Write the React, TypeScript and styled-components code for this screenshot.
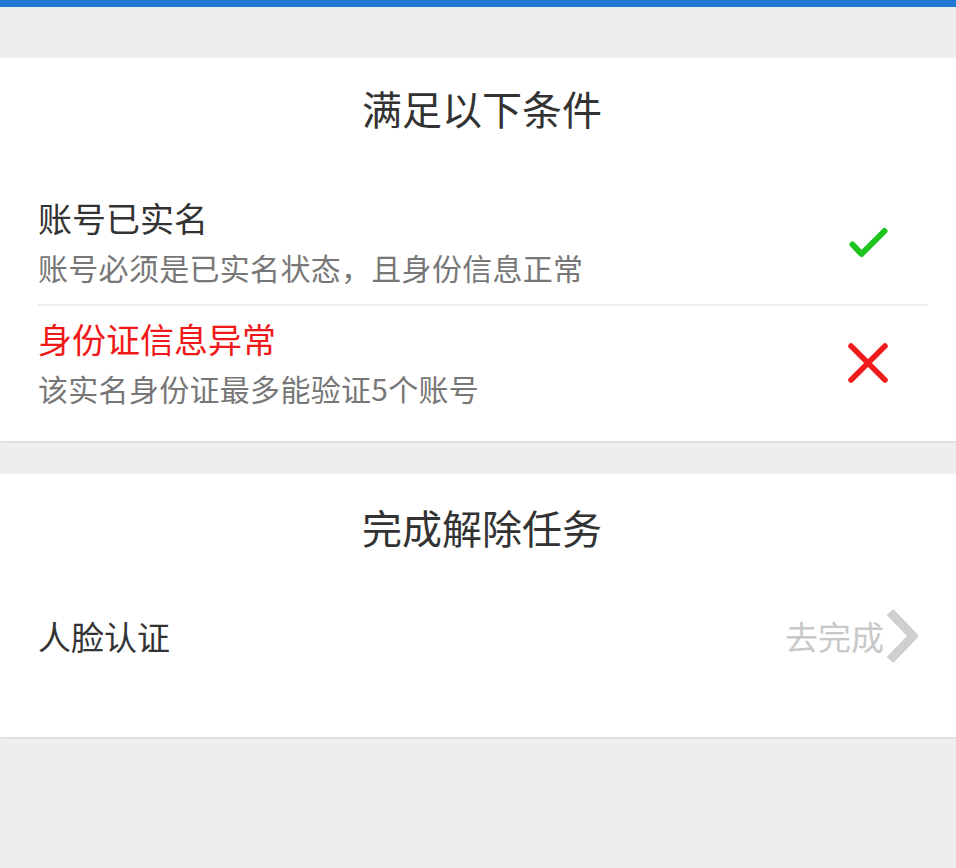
import React from "react";
import styled, { createGlobalStyle } from "styled-components";

const GlobalStyle = createGlobalStyle`
  html, body {
    margin: 0;
    padding: 0;
    background: #eeeeee;
  }
  body {
    font-family: "Noto Sans CJK SC", "Noto Sans", sans-serif;
    -webkit-font-smoothing: antialiased;
  }
`;

const Page = styled.div`
  min-height: 868px;
  background: #eeeeee;
  display: flex;
  flex-direction: column;
`;

const TopBar = styled.div`
  height: 7px;
  background: #2079d4;
`;

const Card = styled.section<{ $mt: number; $pb: number }>`
  margin-top: ${(p) => p.$mt}px;
  background: #ffffff;
  box-shadow: 0 1px 2px rgba(0, 0, 0, 0.12);
  padding-bottom: ${(p) => p.$pb}px;
  display: flex;
  flex-direction: column;
`;

const CardTitle = styled.h2<{ $pt: number; $mb: number }>`
  margin: 0;
  padding-top: ${(p) => p.$pt}px;
  padding-left: 8px;
  margin-bottom: ${(p) => p.$mb}px;
  text-align: center;
  font-size: 40px;
  line-height: 44px;
  font-weight: 400;
  color: #333333;
`;

const ConditionRow = styled.div<{ $divider?: boolean }>`
  margin-left: 38px;
  margin-right: 28px;
  padding: 11px 40px 17px 0;
  display: flex;
  align-items: center;
  border-bottom: ${(p) => (p.$divider ? "2px solid #ececec" : "none")};
`;

const RowText = styled.div`
  flex: 1;
  display: flex;
  flex-direction: column;
  gap: 7px;
`;

const RowTitle = styled.div<{ $error?: boolean }>`
  font-size: 34px;
  line-height: 44px;
  color: ${(p) => (p.$error ? "#f01818" : "#333333")};
`;

const RowDesc = styled.div`
  font-size: 30px;
  line-height: 40px;
  letter-spacing: 0.3px;
  color: #777777;
`;

const StatusIcon = styled.svg`
  width: 40px;
  height: 40px;
  flex: none;
`;

const TaskRow = styled.div`
  height: 120px;
  padding-left: 38px;
  padding-right: 38px;
  display: flex;
  align-items: center;
`;

const TaskName = styled.div`
  flex: 1;
  font-size: 33px;
  line-height: 46px;
  color: #333333;
`;

const TaskAction = styled.div`
  display: flex;
  align-items: center;
  gap: 2px;
  font-size: 33px;
  line-height: 46px;
  color: #c8c8c8;
`;

const Chevron = styled.svg`
  width: 32px;
  height: 52px;
  flex: none;
`;

const CheckIcon = () => (
  <StatusIcon viewBox="0 0 40 40">
    <polyline
      points="4.5,22.5 13.5,32 36.5,9"
      fill="none"
      stroke="#1ec41e"
      strokeWidth="6"
      strokeLinecap="round"
      strokeLinejoin="round"
    />
  </StatusIcon>
);

const CrossIcon = () => (
  <StatusIcon viewBox="0 0 40 40">
    <path
      d="M3 3 L37 37 M37 3 L3 37"
      fill="none"
      stroke="#f01c1c"
      strokeWidth="5.5"
      strokeLinecap="round"
    />
  </StatusIcon>
);

export default function App() {
  return (
    <>
      <GlobalStyle />
      <Page>
        <TopBar />
        <Card $mt={51} $pb={16}>
          <CardTitle $pt={28} $mb={55}>满足以下条件</CardTitle>
          <ConditionRow $divider>
            <RowText>
              <RowTitle>账号已实名</RowTitle>
              <RowDesc>账号必须是已实名状态，且身份信息正常</RowDesc>
            </RowText>
            <CheckIcon />
          </ConditionRow>
          <ConditionRow>
            <RowText>
              <RowTitle $error>身份证信息异常</RowTitle>
              <RowDesc>该实名身份证最多能验证5个账号</RowDesc>
            </RowText>
            <CrossIcon />
          </ConditionRow>
        </Card>
        <Card $mt={33} $pb={41}>
          <CardTitle $pt={31} $mb={27}>完成解除任务</CardTitle>
          <TaskRow>
            <TaskName>人脸认证</TaskName>
            <TaskAction>
              去完成
              <Chevron viewBox="0 0 32 52">
                <polyline
                  points="4,2 27,26 4,50"
                  fill="none"
                  stroke="#cfcfcf"
                  strokeWidth="9"
                  strokeLinejoin="miter"
                />
              </Chevron>
            </TaskAction>
          </TaskRow>
        </Card>
      </Page>
    </>
  );
}
